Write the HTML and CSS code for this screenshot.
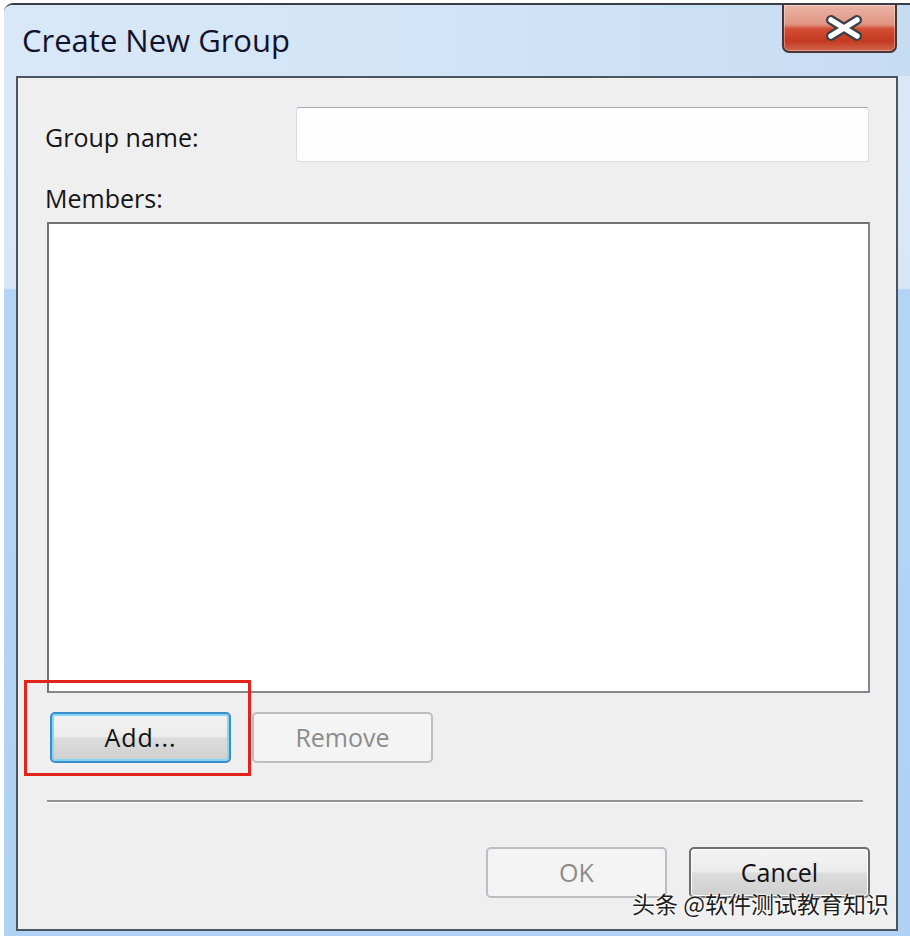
FILE: index.html
```html
<!DOCTYPE html>
<html>
<head>
<meta charset="utf-8">
<link rel="stylesheet" href="styles.css">
</head>
<body>
<div class="window">
  <div class="titlebar">
    <div class="title">Create New Group</div>
    <div class="close">
      <svg width="42" height="28" viewBox="0 0 42 28">
        <path d="M8 6 L34 22 M34 6 L8 22" stroke="#3b3f4a" stroke-width="10" stroke-linecap="round" fill="none"/>
        <path d="M8 6 L34 22 M34 6 L8 22" stroke="#ffffff" stroke-width="5.5" stroke-linecap="round" fill="none"/>
      </svg>
    </div>
  </div>
  <div class="client">
    <div class="name-row">
      <div class="lbl">Group name:</div>
      <div class="textbox"></div>
    </div>
    <div class="lbl members-lbl">Members:</div>
    <div class="listbox"></div>
    <div class="btn-row">
      <div class="btn btn-focus">Add...</div>
      <div class="btn btn-disabled">Remove</div>
    </div>
    <div class="sep"></div>
    <div class="footer">
      <div class="btn btn-disabled">OK</div>
      <div class="btn btn-normal">Cancel</div>
    </div>
    <div class="highlight"></div>
    <div class="watermark">头条 @软件测试教育知识</div>
  </div>
</div>
</body>
</html>
```

FILE: styles.css
```css
html, body {
  margin: 0;
  padding: 0;
  background: #ffffff;
}
body {
  width: 910px;
  height: 936px;
  overflow: hidden;
  font-family: "Open Sans", "Noto Sans", sans-serif;
  color: #151515;
}
.window {
  margin: 3px 0 0 4px;
  width: 906px;
  height: 933px;
  box-sizing: border-box;
  border-top: 2px solid #3a3d42;
  border-top-left-radius: 9px;
  background: linear-gradient(to bottom, #dae8f8 0px, #d8e7f7 283px, #b4d4f5 285px, #b0d2f4 100%);
  overflow: hidden;
}
.titlebar {
  height: 71px;
  display: flex;
  align-items: flex-start;
  background: linear-gradient(to right, #d9e8f8 0%, #d0e3f6 60%, #c6dcf3 100%);
}
.title {
  padding: 14px 0 0 18px;
  font-size: 31px;
  line-height: 42px;
  color: #12122a;
}
.close {
  margin-left: auto;
  margin-right: 13px;
  width: 115px;
  height: 48px;
  box-sizing: border-box;
  border: 2px solid #4a3434;
  border-top: none;
  border-radius: 0 0 7px 7px;
  background: linear-gradient(to bottom, #ebb5a8 0%, #e09482 42%, #d24d33 52%, #c33a21 78%, #d3644c 100%);
  box-shadow: inset 0 0 0 1px rgba(255, 255, 255, 0.35);
  display: flex;
  align-items: center;
  justify-content: center;
  padding-left: 8px;
}
.client {
  position: relative;
  margin-left: 12px;
  width: 882px;
  height: 855px;
  box-sizing: border-box;
  border: 2px solid #4b5560;
  background: #f0eff0;
  padding: 0 27px;
}
.name-row {
  margin-top: 29px;
  height: 55px;
  display: flex;
  align-items: center;
  justify-content: space-between;
}
.lbl {
  font-size: 25px;
  line-height: 30px;
}
.name-row .lbl {
  margin-top: 4px;
}
.textbox {
  width: 573px;
  height: 55px;
  box-sizing: border-box;
  border: 1px solid #dadde3;
  border-top-color: #a6a8ad;
  border-radius: 3px;
  background: #fdfdfe;
}
.members-lbl {
  margin-top: 21px;
  margin-bottom: 9px;
}
.listbox {
  margin-left: 2px;
  width: 823px;
  height: 471px;
  box-sizing: border-box;
  border: 2px solid #85878a;
  border-top-color: #707275;
  border-left-color: #707275;
  background: #ffffff;
}
.btn-row {
  margin-top: 19px;
  margin-left: 5px;
  display: flex;
  gap: 21px;
}
.btn {
  width: 181px;
  height: 51px;
  box-sizing: border-box;
  border-radius: 5px;
  font-size: 25px;
  line-height: 30px;
  display: flex;
  align-items: center;
  justify-content: center;
  padding-bottom: 2px;
}
.btn-focus {
  border: 2px solid #3a8ccc;
  box-shadow: inset 0 0 0 2px #86d6f6;
  background: linear-gradient(to bottom, #f3f3f3 0%, #ececec 48%, #dcdcdc 52%, #cfcfcf 100%);
  color: #111111;
  letter-spacing: 1px;
}
.btn-normal {
  border: 2px solid #6e6e6e;
  box-shadow: inset 0 0 0 1px #fbfbfb;
  background: linear-gradient(to bottom, #f3f3f3 0%, #ececec 48%, #dcdcdc 52%, #cfcfcf 100%);
  color: #111111;
}
.btn-disabled {
  border: 2px solid #bcbec1;
  background: #f4f4f4;
  color: #8c8c8c;
}
.sep {
  margin-top: 37px;
  margin-left: 2px;
  width: 816px;
  height: 2px;
  background: #949494;
  box-shadow: 0 1px 0 #ffffff;
}
.footer {
  margin-top: 45px;
  display: flex;
  justify-content: flex-end;
  gap: 22px;
  margin-right: -1px;
}
.highlight {
  position: absolute;
  left: 6px;
  top: 602px;
  width: 227px;
  height: 96px;
  box-sizing: border-box;
  border: 3px solid #e2231c;
}
.watermark {
  position: absolute;
  left: 614px;
  top: 815px;
  font-family: "Noto Sans CJK SC", sans-serif;
  font-size: 23px;
  line-height: 20px;
  color: #1e1e1e;
  white-space: nowrap;
  text-shadow: 0 0 2px #ffffff, 0 0 2px #ffffff, 0 0 3px #ffffff;
}
```
